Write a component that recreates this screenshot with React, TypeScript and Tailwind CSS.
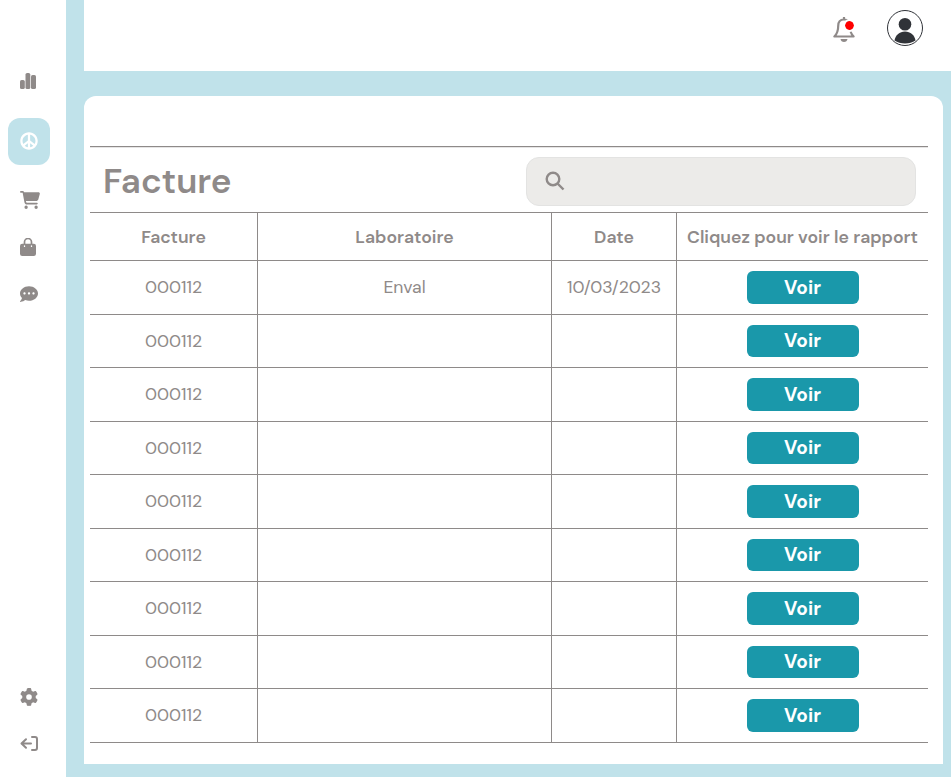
import React from 'react';
import { FaCommentDots, FaPeace } from 'react-icons/fa';
import { FaCartShopping, FaGear } from 'react-icons/fa6';

const rows = Array.from({ length: 9 }, (_, i) => ({
  facture: '000112',
  labo: i === 0 ? 'Enval' : '',
  date: i === 0 ? '10/03/2023' : '',
}));

const columns = 'grid grid-cols-[168px_294px_125px_251px] border-b border-[#8e8a89]';
const cell = 'flex items-center justify-center border-r border-[#8e8a89] pt-[0.5px] whitespace-nowrap';
const headCell = 'flex items-center justify-center border-r border-[#8e8a89] pt-0.5 whitespace-nowrap';
const lastCell = 'flex items-center justify-center whitespace-nowrap';

function Sidebar() {
  return (
    <aside className="flex w-[66px] shrink-0 flex-col bg-white text-[#8f8a89]">
      <svg className="mt-[73px] ml-5" width="16" height="16" viewBox="0 0 16 16" fill="currentColor">
        <rect x="0" y="7" width="4.8" height="9" rx="1.6" />
        <rect x="5.5" y="0" width="4.8" height="16" rx="1.6" />
        <rect x="11" y="2" width="5" height="14" rx="1.6" />
      </svg>
      <div className="mt-[29px] ml-2 flex h-[47px] w-[42px] items-center justify-center rounded-[12px] bg-[#c0e2ea] text-white">
        <FaPeace className="mb-px" size={18} />
      </div>
      <FaCartShopping className="mt-[25px] ml-5" size={20} />
      <svg className="mt-[28px] ml-5" width="16" height="18" viewBox="0 0 16 18">
        <path d="M4.5 7V4a3.5 3.5 0 0 1 7 0v3" fill="none" stroke="currentColor" strokeWidth="1.7" />
        <rect x="0" y="5.7" width="16" height="12.3" rx="2.2" fill="currentColor" />
        <path d="M4.5 7.8v.6M11.5 7.8v.6" stroke="white" strokeWidth="1.3" strokeLinecap="round" />
      </svg>
      <FaCommentDots className="mt-[29px] ml-5" size={18} />
      <FaGear className="mt-auto ml-5" size={18} />
      <svg className="mt-[30.5px] mb-[26px] ml-5" width="19" height="15" viewBox="0 0 19 15" fill="none" stroke="currentColor" strokeWidth="2" strokeLinecap="round" strokeLinejoin="round">
        <path d="M11 7.5H2M6 3.2 1.5 7.5 6 11.8M12 1h3a2 2 0 0 1 2 2v9a2 2 0 0 1-2 2h-3" />
      </svg>
    </aside>
  );
}

function Header() {
  return (
    <header className="flex h-[71px] items-start justify-end bg-white pr-7">
      <div className="relative mt-[17px] mr-8 text-[#8f8a89]">
        <svg width="22" height="25" viewBox="0 0 22 25" fill="none" stroke="currentColor" strokeWidth="2.200">
          <path d="M11 0v3M11 2.500C7 2.500 5.200 5.500 5.200 9c0 5-1 7.800-3.800 10.500h19.200C17.800 16.800 16.800 14 16.800 9c0-3.500-1.800-6.500-5.800-6.500Z" strokeLinejoin="round" />
          <path d="M7.500 22h7c-.3 1.800-1.600 3-3.500 3s-3.200-1.200-3.500-3Z" fill="currentColor" stroke="none" />
        </svg>
        <span className="absolute top-[4px] left-[12px] size-[9px] rounded-full bg-[#ff0000] outline-2 outline-white" />
      </div>
      <svg className="mt-[10px]" width="36" height="36" viewBox="0 0 36 36">
        <circle cx="18" cy="18" r="17.500" fill="white" stroke="#303338" />
        <circle cx="18" cy="14.200" r="6.300" fill="#303338" />
        <path d="M7.500 30.500C8.500 25 12.500 21.500 18 21.500S27.500 25 28.500 30.500C25.500 32.500 22 33.500 18 33.500S10.500 32.500 7.500 30.500Z" fill="#303338" />
      </svg>
    </header>
  );
}

export default function App() {
  return (
    <div className="flex h-[777px] w-[951px] overflow-hidden bg-[#c0e2ea] font-['DM_Sans','Inter',sans-serif] text-[#8f8a89] [font-optical-sizing:none]">
      <Sidebar />
      <div className="ml-[18px] flex flex-1 flex-col">
        <Header />
        <main className="mt-[25px] mr-2 h-[668px] rounded-t-[12px] bg-white pt-[50px] pr-[15px] pl-[6px]">
          <div className="flex h-[67px] items-center justify-between border-t border-b border-[#8e8a89] pt-[3px] pr-3 pl-[13px] shadow-[inset_0_1px_0_#e6e5e5]">
            <h1 className="text-[35px] font-[650]">Facture</h1>
            <label className="flex h-[49px] w-[390px] items-center rounded-[13px] border border-[#e3e3e2] bg-[#ecebe9] pl-[18px]">
              <svg width="20" height="20" viewBox="0 0 20 20" fill="none" stroke="currentColor" strokeWidth="2.400">
                <circle cx="8" cy="8" r="6.300" />
                <path d="m12.500 12.500 6 6" />
              </svg>
            </label>
          </div>
          <div className={`${columns} h-12 text-[17.6px] font-semibold`}>
            <div className={headCell}>Facture</div>
            <div className={headCell}>Laboratoire</div>
            <div className={headCell}>Date</div>
            <div className={`${lastCell} pt-0.5`}>Cliquez pour voir le rapport</div>
          </div>
          {rows.map((row, i) => (
            <div key={i} className={`${columns} h-[53.5px] text-[17.6px] font-normal`}>
              <div className={cell}>{row.facture}</div>
              <div className={cell}>{row.labo}</div>
              <div className={cell}>{row.date}</div>
              <div className={lastCell}>
                <button className="h-[32.5px] w-28 rounded-[6px] bg-[#1a98aa] pt-px text-[19px] font-bold text-white">Voir</button>
              </div>
            </div>
          ))}
        </main>
      </div>
    </div>
  );
}
